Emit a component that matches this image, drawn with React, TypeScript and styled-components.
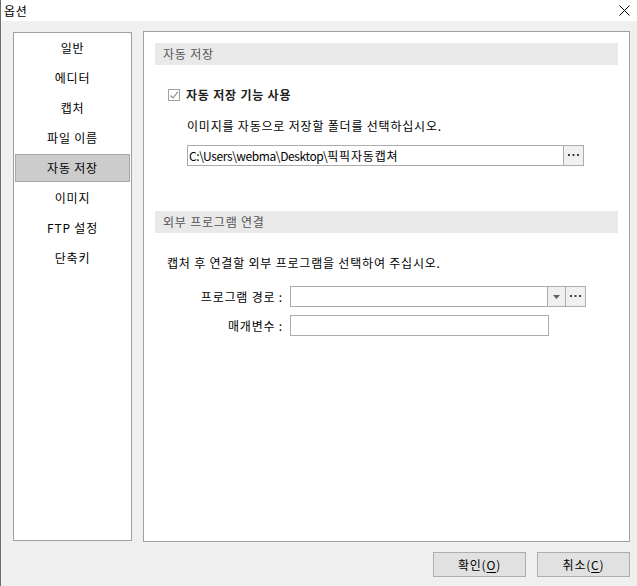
import React from 'react'
import styled, { createGlobalStyle } from 'styled-components'

const GlobalStyle = createGlobalStyle`
  html, body {
    margin: 0;
    padding: 0;
    background: #f0f0f0;
  }
  body {
    font-family: "Noto Sans CJK KR", "Noto Sans", sans-serif;
    font-size: 12px;
    letter-spacing: 0.8px;
    color: #000;
  }
`

const Window = styled.div`
  width: 637px;
  height: 586px;
  box-sizing: border-box;
  border-left: 1px solid #6e6e6e;
  background: #f0f0f0;
  display: flex;
  flex-direction: column;
  overflow: hidden;
`

const TitleBar = styled.div`
  height: 21px;
  background: #fff;
  display: flex;
  align-items: center;
  justify-content: space-between;
  padding: 0 7px 0 3px;
  line-height: 16px;
`

const Body = styled.div`
  display: flex;
  flex-direction: column;
  padding: 10px 7px 0 12px;
`

const Main = styled.div`
  display: flex;
  align-items: flex-start;
  gap: 11px;
`

const NavList = styled.div`
  margin-top: 1px;
  width: 119px;
  height: 509px;
  box-sizing: border-box;
  border: 1px solid #a0a0a0;
  background: #fff;
  padding: 1px 1px 0;
  display: flex;
  flex-direction: column;
  gap: 2px;
`

const NavItem = styled.div<{ $active?: boolean }>`
  height: 28px;
  box-sizing: border-box;
  display: flex;
  align-items: center;
  justify-content: center;
  line-height: 16px;
  border: 1px solid ${p => (p.$active ? '#a6a6a6' : 'transparent')};
  background: ${p => (p.$active ? '#cccccc' : 'transparent')};
`

const Content = styled.div`
  width: 487px;
  height: 511px;
  box-sizing: border-box;
  border: 1px solid #a0a0a0;
  background: #fff;
  padding: 11px 11px 0;
  display: flex;
  flex-direction: column;
`

const SectionHeader = styled.div<{ $gap?: number }>`
  margin-top: ${p => p.$gap ?? 0}px;
  height: 22px;
  background: #e9e9e9;
  color: #555;
  padding-left: 8px;
  display: flex;
  align-items: center;
  line-height: 16px;
`

const CheckRow = styled.label`
  margin-top: 22px;
  padding-left: 13px;
  height: 16px;
  display: flex;
  align-items: center;
  gap: 6px;
  font-weight: 700;
  color: #222;
  line-height: 16px;
`

const CheckBox = styled.span`
  width: 12px;
  height: 12px;
  box-sizing: border-box;
  border: 1px solid #a0a0a0;
  display: flex;
  align-items: center;
  justify-content: center;
`

const Desc = styled.div<{ $indent: number; $gap: number }>`
  margin-top: ${p => p.$gap}px;
  padding-left: ${p => p.$indent}px;
  line-height: 16px;
`

const FieldRow = styled.div<{ $indent: number; $gap: number }>`
  margin-top: ${p => p.$gap}px;
  padding-left: ${p => p.$indent}px;
  display: flex;
  align-items: center;
`

const FieldLabel = styled.div`
  width: 128px;
  margin-right: 7px;
  text-align: right;
  line-height: 16px;
  white-space: nowrap;
`

const TextBox = styled.div<{ $width: number }>`
  width: ${p => p.$width}px;
  height: 21px;
  box-sizing: border-box;
  border: 1px solid #acacac;
  background: #fff;
  display: flex;
  align-items: center;
  padding-left: 1px;
  line-height: 16px;
  white-space: nowrap;
  overflow: hidden;
`

const Latin = styled.span`
  letter-spacing: -0.4px;
`

const SideButton = styled.div<{ $width: number }>`
  width: ${p => p.$width}px;
  height: 21px;
  box-sizing: border-box;
  border: 1px solid #acacac;
  border-left: none;
  background: #f0f0f0;
  display: flex;
  align-items: center;
  justify-content: center;
`

const Footer = styled.div`
  margin-top: 10px;
  display: flex;
  justify-content: flex-end;
  gap: 11px;
`

const Button = styled.div`
  width: 93px;
  height: 25px;
  box-sizing: border-box;
  border: 1px solid #adadad;
  background: #e1e1e1;
  display: flex;
  align-items: center;
  justify-content: center;
  line-height: 16px;

  u {
    text-underline-offset: 2px;
  }
`

function Dots() {
  return (
    <svg width="11" height="3" viewBox="0 0 11 3">
      <rect x="0" y="0" width="2" height="2" fill="#404040" />
      <rect x="4.5" y="0" width="2" height="2" fill="#404040" />
      <rect x="9" y="0" width="2" height="2" fill="#404040" />
    </svg>
  )
}

const navItems = ['일반', '에디터', '캡처', '파일 이름', '자동 저장', '이미지', 'FTP 설정', '단축키']

export default function App() {
  return (
    <>
      <GlobalStyle />
      <Window>
        <TitleBar>
          <span>옵션</span>
          <svg width="11" height="11" viewBox="0 0 11 11">
            <path d="M0.5 0.5 L10.5 10.5 M10.5 0.5 L0.5 10.5" stroke="#000" strokeWidth="1" />
          </svg>
        </TitleBar>
        <Body>
          <Main>
            <NavList>
              {navItems.map(item => (
                <NavItem key={item} $active={item === '자동 저장'}>
                  {item}
                </NavItem>
              ))}
            </NavList>
            <Content>
              <SectionHeader>자동 저장</SectionHeader>
              <CheckRow>
                <CheckBox>
                  <svg width="10" height="10" viewBox="0 0 10 10">
                    <path d="M1.5 5.5 L4 8 L8.8 1.8" stroke="#8a8a8a" strokeWidth="1.1" fill="none" />
                  </svg>
                </CheckBox>
                자동 저장 기능 사용
              </CheckRow>
              <Desc $indent={32} $gap={15}>
                이미지를 자동으로 저장할 폴더를 선택하십시오.
              </Desc>
              <FieldRow $indent={32} $gap={11}>
                <TextBox $width={377}>
                  <Latin>C:\Users\webma\Desktop\</Latin>픽픽자동캡쳐
                </TextBox>
                <SideButton $width={20}>
                  <Dots />
                </SideButton>
              </FieldRow>

              <SectionHeader $gap={45}>외부 프로그램 연결</SectionHeader>
              <Desc $indent={12} $gap={22}>
                캡처 후 연결할 외부 프로그램을 선택하여 주십시오.
              </Desc>
              <FieldRow $indent={0} $gap={15}>
                <FieldLabel>프로그램 경로 :</FieldLabel>
                <TextBox $width={258} />
                <SideButton $width={18}>
                  <svg width="7" height="4" viewBox="0 0 7 4">
                    <path d="M0 0 L7 0 L3.5 4 Z" fill="#606060" />
                  </svg>
                </SideButton>
                <SideButton $width={20}>
                  <Dots />
                </SideButton>
              </FieldRow>
              <FieldRow $indent={0} $gap={8}>
                <FieldLabel>매개변수 :</FieldLabel>
                <TextBox $width={259} />
              </FieldRow>
            </Content>
          </Main>
          <Footer>
            <Button>
              확인(<u>O</u>)
            </Button>
            <Button>
              취소(<u>C</u>)
            </Button>
          </Footer>
        </Body>
      </Window>
    </>
  )
}
